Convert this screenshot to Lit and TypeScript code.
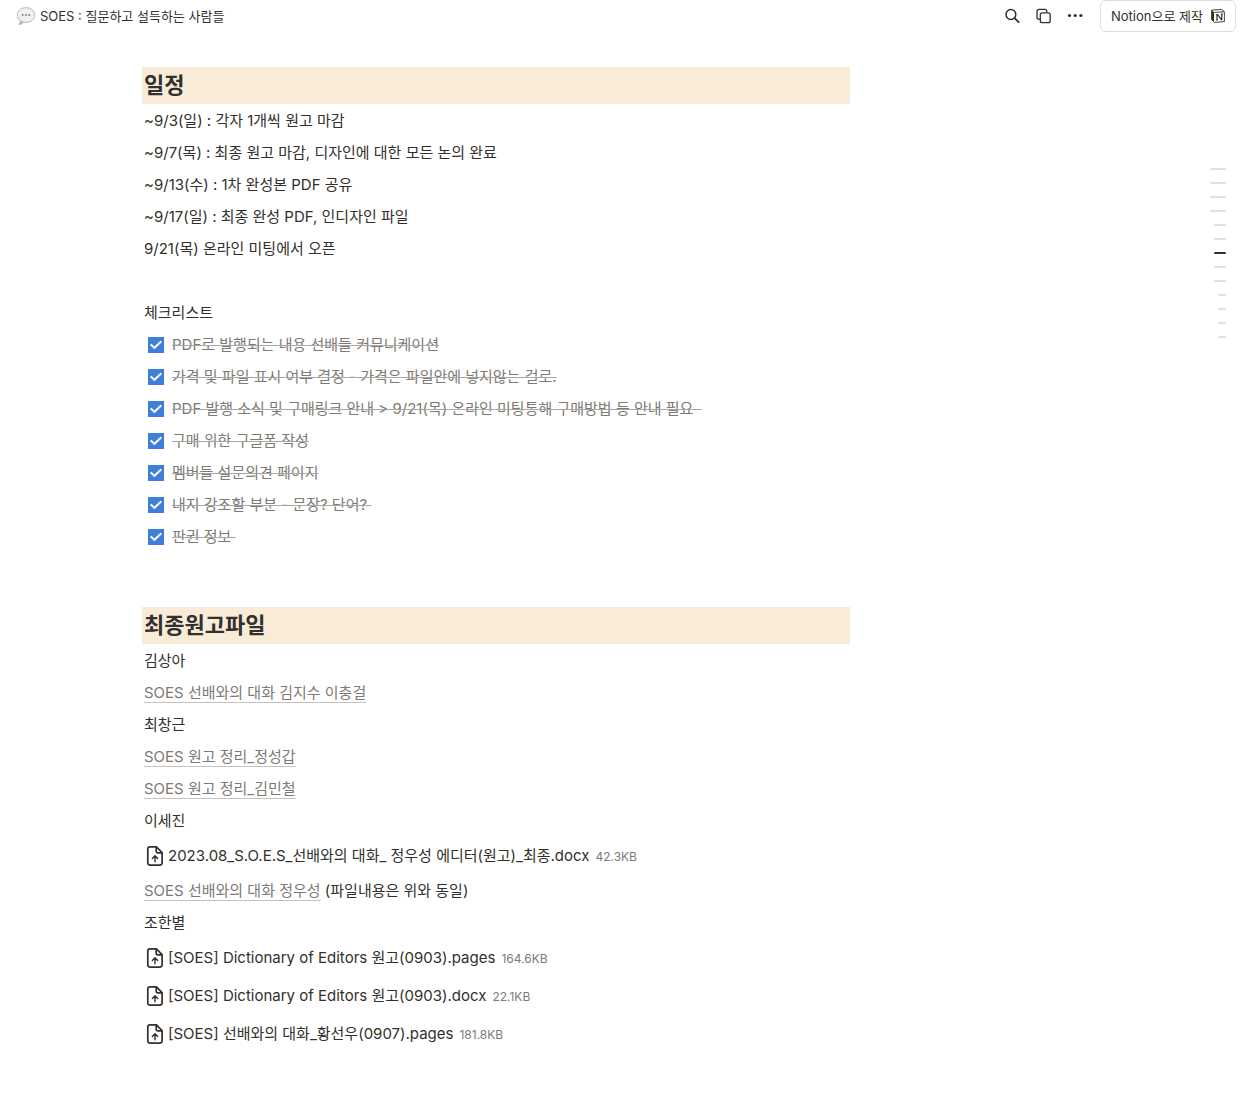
import { LitElement, html, css, svg, nothing } from "lit";
import { customElement, property } from "lit/decorators.js";

const schedule = [
  "~9/3(일) : 각자 1개씩 원고 마감",
  "~9/7(목) : 최종 원고 마감, 디자인에 대한 모든 논의 완료",
  "~9/13(수) : 1차 완성본 PDF 공유",
  "~9/17(일) : 최종 완성 PDF, 인디자인 파일",
  "9/21(목) 온라인 미팅에서 오픈",
];

const checklist = [
  "PDF로 발행되는 내용 선배들 커뮤니케이션",
  "가격 및 파일 표시 여부 결정 - 가격은 파일안에 넣지않는 걸로.",
  "PDF 발행 소식 및 구매링크 안내 > 9/21(목) 온라인 미팅통해 구매방법 등 안내 필요  ",
  "구매 위한 구글폼 작성",
  "멤버들 설문의견 페이지",
  "내지 강조할 부분 - 문장? 단어? ",
  "판권 정보 ",
];

type Block =
  | { kind: "text"; text: string }
  | { kind: "link"; text: string; after?: string }
  | { kind: "file"; text: string; size: string };

const manuscripts: Block[] = [
  { kind: "text", text: "김상아" },
  { kind: "link", text: "SOES 선배와의 대화 김지수 이충걸" },
  { kind: "text", text: "최창근" },
  { kind: "link", text: "SOES 원고 정리_정성갑" },
  { kind: "link", text: "SOES 원고 정리_김민철" },
  { kind: "text", text: "이세진" },
  { kind: "file", text: "2023.08_S.O.E.S_선배와의 대화_ 정우성 에디터(원고)_최종.docx", size: "42.3KB" },
  { kind: "link", text: "SOES 선배와의 대화 정우성", after: " (파일내용은 위와 동일)" },
  { kind: "text", text: "조한별" },
  { kind: "file", text: "[SOES] Dictionary of Editors 원고(0903).pages", size: "164.6KB" },
  { kind: "file", text: "[SOES] Dictionary of Editors 원고(0903).docx", size: "22.1KB" },
  { kind: "file", text: "[SOES] 선배와의 대화_황선우(0907).pages", size: "181.8KB" },
];

const outlineLevels = [1, 1, 1, 1, 2, 2, 2, 2, 2, 3, 3, 3, 3];
const activeOutline = 6;

const bubbleIcon = svg`<svg width="20" height="20" viewBox="0 0 20 20" aria-hidden="true">
  <path d="M4.500 14.300c.1 1.500-.6 2.900-1.700 4 2.100-.1 3.900-1 5.100-2.400" fill="#c4c4c6" stroke="#a0a0a2" stroke-width=".8"/>
  <path d="M10 1.700c-4.900 0-8.700 3.200-8.700 7.400 0 4.100 3.800 7.300 8.700 7.300s8.700-3.200 8.700-7.300c0-4.200-3.800-7.400-8.700-7.400z" fill="#f0f0f1" stroke="#b8b8ba" stroke-width="1"/>
  <circle cx="6.700" cy="9" r=".9" fill="#77777a"/><circle cx="10" cy="9" r=".9" fill="#77777a"/><circle cx="13.300" cy="9" r=".9" fill="#77777a"/>
</svg>`;

const searchIcon = svg`<svg width="20" height="20" viewBox="0 0 20 20" fill="none" stroke="#32302c" stroke-linecap="round" aria-hidden="true">
  <circle cx="8.900" cy="8.500" r="4.900" stroke-width="1.500"/><path d="M12.600 12.200l4 4" stroke-width="1.800"/>
</svg>`;

const copyIcon = svg`<svg width="20" height="20" viewBox="0 0 20 20" fill="none" stroke="#32302c" stroke-width="1.300" stroke-linejoin="round" aria-hidden="true">
  <path d="M6.300 13.200H5a2 2 0 0 1-2-2V5.400a2 2 0 0 1 2-2h5.800a2 2 0 0 1 2 2V6.600"/>
  <rect x="6.300" y="6.800" width="9.900" height="9.900" rx="2"/>
</svg>`;

const dotsIcon = svg`<svg width="20" height="20" viewBox="0 0 20 20" fill="#32302c" aria-hidden="true">
  <circle cx="3.500" cy="9.500" r="1.600"/><circle cx="9.200" cy="9.500" r="1.600"/><circle cx="14.900" cy="9.500" r="1.600"/>
</svg>`;

const notionIcon = svg`<svg width="14" height="14" viewBox="0 0 14 14" aria-hidden="true">
  <path d="M.6 1.100L10.300.5l3.100 2.300v9.800l-10 .8L.6 10.500z" fill="#fff" stroke="#32302c" stroke-width=".9" stroke-linejoin="round"/>
  <path d="M.6 1.100l2.400 2.200v9.700L.6 10.500z" fill="#32302c"/>
  <path d="M3.200 3.400l10-.6" stroke="#32302c" stroke-width=".9"/>
  <path d="M6 11V5.600M5.200 5.500h1.400l3.800 5.200h.4V5.200M5.100 11h1.800M9.800 5.200h1.900" fill="none" stroke="#32302c" stroke-width="1.200"/>
</svg>`;

const fileIcon = svg`<svg width="20" height="20" viewBox="0 0 20 20" fill="none" stroke="#32302c" stroke-width="1.700" stroke-linejoin="round" stroke-linecap="round" aria-hidden="true">
  <path d="M5 .9h6.400l5.700 5.700v10.300a2.200 2.200 0 0 1-2.200 2.200H5a2.200 2.200 0 0 1-2.200-2.200V3.100A2.200 2.200 0 0 1 5 .9z"/>
  <path d="M11.200 1.200v4a1.600 1.600 0 0 0 1.600 1.600h4"/>
  <path d="M10 15.800v-5.800M7.300 12.400L10 9.700l2.700 2.700" stroke-width="1.400"/>
</svg>`;

@customElement("page-header")
export class PageHeader extends LitElement {
  static styles = css`
    :host { display: block; }
    .bar {
      display: flex;
      align-items: center;
      justify-content: space-between;
      height: 32px;
      padding: 0 4px 0 16px;
    }
    .title, .made {
      display: flex;
      align-items: center;
      color: #32302c;
      text-decoration: none;
      font-size: 13px;
      line-height: 20px;
      white-space: nowrap;
    }
    .title { gap: 4px; }
    .actions { display: flex; align-items: center; }
    .icon {
      display: flex;
      padding: 4px 6px;
      border: 0;
      background: none;
    }
    .icons { display: flex; margin-right: 8px; }
    .made {
      box-sizing: border-box;
      gap: 8px;
      height: 32px;
      padding: 0 10px;
      border: 1px solid #dfdfde;
      border-radius: 6px;
    }
    svg { display: block; flex: none; }
  `;

  render() {
    return html`<header class="bar">
      <a class="title" href="#">${bubbleIcon}<span>SOES : 질문하고 설득하는 사람들</span></a>
      <div class="actions">
        <div class="icons">
          <button class="icon" aria-label="검색">${searchIcon}</button>
          <button class="icon" aria-label="복제">${copyIcon}</button>
          <button class="icon" aria-label="더 보기">${dotsIcon}</button>
        </div>
        <a class="made" href="#"><span>Notion으로 제작</span>${notionIcon}</a>
      </div>
    </header>`;
  }
}

@customElement("todo-item")
export class TodoItem extends LitElement {
  @property() label = "";

  static styles = css`
    :host { display: block; }
    .todo {
      display: flex;
      align-items: flex-start;
      gap: 8px;
      padding: 4px 6px;
      line-height: 24px;
    }
    .box {
      appearance: none;
      flex: none;
      display: grid;
      place-items: center;
      width: 16px;
      height: 16px;
      margin: 4px 0;
      background: #fff;
      border: 1px solid #32302c;
    }
    .box:checked { background: #3f7fdc; border: 0; }
    .box:checked::before {
      content: "";
      width: 12px;
      height: 12px;
      background: #fff;
      clip-path: polygon(37% 86%, 0 51%, 11% 39%, 37% 63%, 89% 13%, 100% 24%);
    }
    .label {
      color: #7d7a75;
      white-space: pre-wrap;
      text-decoration: line-through;
      text-decoration-thickness: 1px;
      text-decoration-color: #a9a7a2;
    }
  `;

  render() {
    return html`<div class="todo">
      <input class="box" id="done" type="checkbox" checked />
      <label class="label" for="done">${this.label}</label>
    </div>`;
  }
}

@customElement("page-outline")
export class PageOutline extends LitElement {
  static styles = css`
    :host { display: block; }
    .outline {
      display: flex;
      flex-direction: column;
      align-items: flex-end;
      gap: 12px;
    }
    .mark { width: 16px; height: 2px; border-radius: 2px; background: #e0dfde; }
    .level-2 { width: 12px; }
    .level-3 { width: 8px; }
    .active { background: #32302c; }
  `;

  render() {
    return html`<div class="outline">
      ${outlineLevels.map(
        (level, i) => html`<div class="mark level-${level} ${i === activeOutline ? "active" : ""}"></div>`,
      )}
    </div>`;
  }
}

@customElement("app-root")
export class AppRoot extends LitElement {
  static styles = css`
    :host {
      display: block;
      min-height: 100vh;
      background: #fff;
      color: #32302c;
      font-family: Inter, "Noto Sans CJK KR", sans-serif;
      font-size: 15px;
      line-height: 24px;
    }
    .page {
      display: grid;
      grid-template-columns: minmax(0, 1fr) 390px;
      padding: 35px 0 40px 142px;
    }
    .heading {
      margin: 22px 0 1px;
      padding: 3px 2px;
      background: #f8ecd8;
      font-size: 22px;
      line-height: 31px;
      font-weight: 600;
    }
    .heading:first-child { margin-top: 0; }
    .text { margin: 0; padding: 4px 2px; min-height: 24px; }
    .link {
      color: #7d7a75;
      text-decoration: underline;
      text-decoration-color: #c4c2bf;
      text-decoration-thickness: 1px;
      text-underline-offset: 4px;
    }
    .file {
      display: flex;
      align-items: center;
      gap: 3px;
      padding: 7px 3px;
      color: inherit;
      text-decoration: none;
    }
    .file svg { display: block; flex: none; }
    .name { display: flex; align-items: baseline; gap: 6px; }
    .size { color: #7d7a75; font-size: 12px; line-height: 16px; }
    .side { padding: 101px 14px 0 0; }
    @media (max-width: 900px) {
      .page { grid-template-columns: minmax(0, 1fr) 40px; padding-left: 24px; }
    }
  `;

  private renderBlock(block: Block) {
    if (block.kind === "file") {
      return html`<a class="file" href="#"
        >${fileIcon}<span class="name"><span>${block.text}</span><span class="size">${block.size}</span></span></a
      >`;
    }
    if (block.kind === "link") {
      return html`<p class="text"><a class="link" href="#">${block.text}</a>${block.after ?? nothing}</p>`;
    }
    return html`<p class="text">${block.text}</p>`;
  }

  render() {
    return html`
      <page-header></page-header>
      <main class="page">
        <article>
          <h2 class="heading">일정</h2>
          ${schedule.map((line) => html`<p class="text">${line}</p>`)}
          <p class="text"></p>
          <p class="text">체크리스트</p>
          ${checklist.map((item) => html`<todo-item .label=${item}></todo-item>`)}
          <p class="text"></p>
          <h2 class="heading">최종원고파일</h2>
          ${manuscripts.map((block) => this.renderBlock(block))}
        </article>
        <aside class="side"><page-outline></page-outline></aside>
      </main>
    `;
  }
}
